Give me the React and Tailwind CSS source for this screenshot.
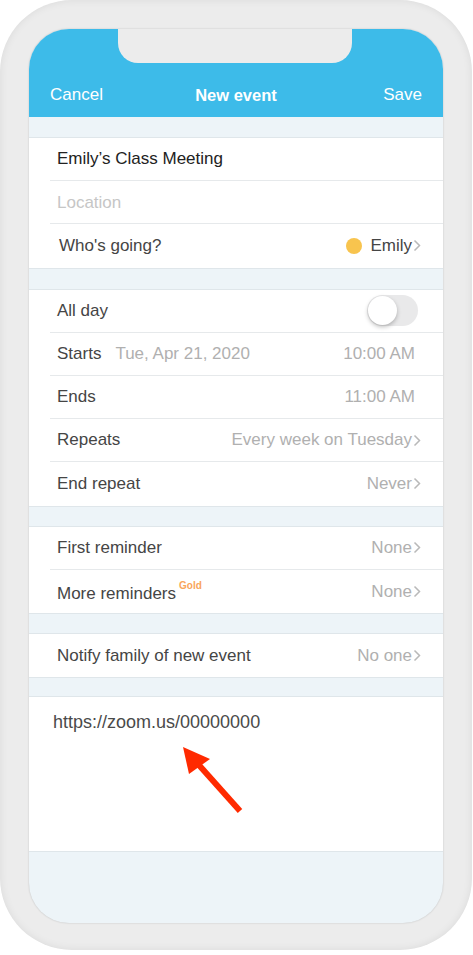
import React from 'react';

const font = { fontFamily: '"Liberation Sans", Arial, sans-serif' };

function Chevron() {
  return (
    <svg width="8" height="13" viewBox="0 0 8 13" className="ml-[1px] shrink-0">
      <polyline points="1.5,1.5 6.5,6.5 1.5,11.5" fill="none" stroke="#b9b9b9" strokeWidth="1.5" />
    </svg>
  );
}

function Row({ children, last }) {
  return (
    <div className="pl-[21px]">
      <div className={`h-[43.2px] flex items-center pl-[7px] pr-[22px] ${last ? '' : 'border-b border-[#e6e9eb]'}`}>
        {children}
      </div>
    </div>
  );
}

function Section({ children }) {
  return <div className="bg-white border-y border-[#dfe6ea]">{children}</div>;
}

function Gap({ h = 'h-[20px]' }) {
  return <div className={h} />;
}

function Toggle() {
  return (
    <div className="w-[51px] h-[31px] rounded-full bg-[#e9e9ea] relative mr-[3px]">
      <div className="absolute left-[1px] top-[1px] w-[29px] h-[29px] rounded-full bg-white shadow-[0_2px_4px_rgba(0,0,0,0.25)]" />
    </div>
  );
}

const label = 'text-[17px] text-[#454545]';
const value = 'text-[17px] text-[#b0b0b0]';

export default function App() {
  return (
    <div className="w-[473px] h-[955px] bg-white" style={font}>
      <div className="w-[472px] h-[950px] rounded-[72px] bg-[#ececec] shadow-[inset_0_0_8px_rgba(0,0,0,0.08)] pt-[29px] pl-[29px]">
        <div className="w-[414px] h-[894px] rounded-[40px] overflow-hidden bg-[#edf4f8] relative flex flex-col shadow-[0_0_2px_rgba(0,0,0,0.2)]">
          {/* notch */}
          <div className="absolute left-[89px] top-0 w-[234px] h-[34px] bg-[#ececec] rounded-b-[20px] z-10" />
          <div className="h-[88px] bg-[#3dbbe9] flex items-end shrink-0">
            <div className="h-[44px] w-full grid grid-cols-3 items-center px-[21px] text-white text-[17px]">
              <span>Cancel</span>
              <span className="font-semibold text-center text-[16.5px] whitespace-nowrap">New event</span>
              <span className="text-right">Save</span>
            </div>
          </div>
          <Gap />
          <Section>
            <Row>
              <span className="text-[17px] text-[#222]">Emily’s Class Meeting</span>
            </Row>
            <Row>
              <span className="text-[17px] text-[#c6c6c6]">Location</span>
            </Row>
            <Row last>
              <span className={`${label} ml-[2px]`}>Who's going?</span>
              <span className="ml-auto w-[16px] h-[16px] rounded-full bg-[#f8c44e] mr-[8px]" />
              <span className={label}>Emily</span>
              <Chevron />
            </Row>
          </Section>
          <Gap />
          <Section>
            <Row>
              <span className={label}>All day</span>
              <span className="ml-auto"><Toggle /></span>
            </Row>
            <Row>
              <span className={label}>Starts</span>
              <span className={`${value} ml-[14px]`}>Tue, Apr 21, 2020</span>
              <span className={`${value} ml-auto mr-[6px]`}>10:00 AM</span>
            </Row>
            <Row>
              <span className={label}>Ends</span>
              <span className={`${value} ml-auto mr-[6px]`}>11:00 AM</span>
            </Row>
            <Row>
              <span className={label}>Repeats</span>
              <span className={`${value} ml-auto`}>Every week on Tuesday</span>
              <Chevron />
            </Row>
            <Row last>
              <span className={label}>End repeat</span>
              <span className={`${value} ml-auto`}>Never</span>
              <Chevron />
            </Row>
          </Section>
          <Gap h="h-[19px]" />
          <Section>
            <Row>
              <span className={label}>First reminder</span>
              <span className={`${value} ml-auto`}>None</span>
              <Chevron />
            </Row>
            <Row last>
              <span className={`${label} mt-[4px]`}>More reminders</span>
              <span className="text-[10px] font-bold text-[#f9a55a] self-start mt-[8px] ml-[3px]">Gold</span>
              <span className={`${value} ml-auto`}>None</span>
              <Chevron />
            </Row>
          </Section>
          <Gap h="h-[19px]" />
          <Section>
            <Row last>
              <span className={label}>Notify family of new event</span>
              <span className={`${value} ml-auto`}>No one</span>
              <Chevron />
            </Row>
          </Section>
          <Gap h="h-[18px]" />
          <div className="bg-white border-y border-[#dfe6ea] h-[156px] relative shrink-0">
            <div className="pl-[24px] pt-[12px] text-[18px] text-[#4a4a4a]">https://zoom.us/00000000</div>
            <svg className="absolute left-[150px] top-[45px]" width="70" height="75" viewBox="0 0 70 75">
              <line x1="61" y1="69" x2="19" y2="22" stroke="#ff2a00" strokeWidth="6" />
              <polygon points="4,5 10,32 31,17" fill="#ff2a00" />
            </svg>
          </div>
        </div>
      </div>
    </div>
  );
}
